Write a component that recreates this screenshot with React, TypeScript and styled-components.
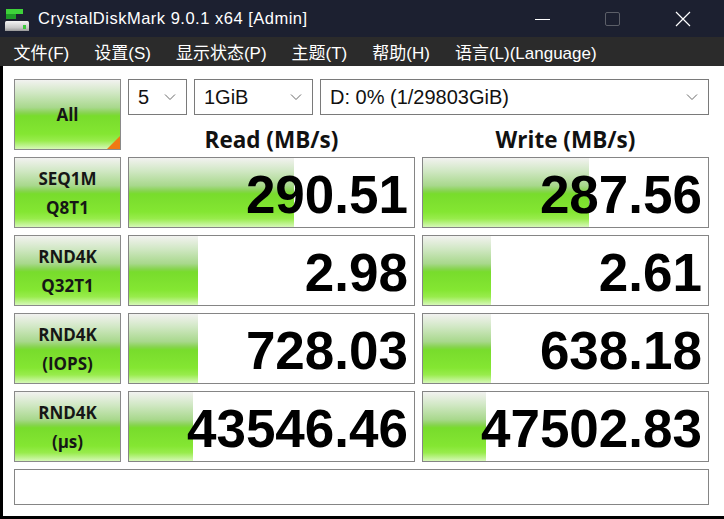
import styled, { createGlobalStyle } from "styled-components";

const GlobalStyle = createGlobalStyle`
  html, body {
    margin: 0;
    padding: 0;
    background: #000;
  }
  body {
    font-family: "Liberation Sans", "Noto Sans CJK SC", sans-serif;
  }
`;

const GREEN = `linear-gradient(
  to bottom,
  #f2f2f0 0%,
  #d2e8c6 18%,
  #a8d88c 40%,
  #86d44e 48%,
  #78dc2c 52%,
  #84e632 78%,
  #98ec4c 88%,
  #d6f8b8 100%
)`;

const menus = ["文件(F)", "设置(S)", "显示状态(P)", "主题(T)", "帮助(H)", "语言(L)(Language)"];

const rows = [
  { top: "SEQ1M", bottom: "Q8T1", read: "290.51", readFill: 165, write: "287.56", writeFill: 166 },
  { top: "RND4K", bottom: "Q32T1", read: "2.98", readFill: 69, write: "2.61", writeFill: 68 },
  { top: "RND4K", bottom: "(IOPS)", read: "728.03", readFill: 69, write: "638.18", writeFill: 68 },
  { top: "RND4K", bottom: "(µs)", read: "43546.46", readFill: 64, write: "47502.83", writeFill: 63 },
];

function AppIcon() {
  return (
    <svg width="24" height="24" viewBox="0 0 24 24">
      <defs>
        <linearGradient id="drive" x1="0" y1="0" x2="0" y2="1">
          <stop offset="0" stopColor="#f4f4f4" />
          <stop offset="0.6" stopColor="#c8c8c8" />
          <stop offset="1" stopColor="#8a8a8a" />
        </linearGradient>
      </defs>
      <rect x="1" y="2" width="17" height="5" fill="#3ed23a" />
      <rect x="1" y="7" width="10" height="5" fill="#1f9a28" />
      <rect x="0" y="14" width="24" height="11" rx="1.5" fill="url(#drive)" />
      <rect x="18" y="18" width="3" height="4" fill="#3cc83c" />
    </svg>
  );
}

function Chevron() {
  return (
    <svg width="12" height="8" viewBox="0 0 12 8">
      <polyline points="1,1.5 6,6.5 11,1.5" fill="none" stroke="#6a6a6a" strokeWidth="1" />
    </svg>
  );
}

function App() {
  return (
    <>
      <GlobalStyle />
      <Window>
        <TitleBar>
          <IconSlot>
            <AppIcon />
          </IconSlot>
          <Title>CrystalDiskMark 9.0.1 x64 [Admin]</Title>
          <Controls>
            <CtrlButton>
              <svg width="16" height="16" viewBox="0 0 16 16">
                <line x1="0" y1="8.5" x2="15" y2="8.5" stroke="#fff" strokeWidth="1" />
              </svg>
            </CtrlButton>
            <CtrlButton>
              <svg width="16" height="16" viewBox="0 0 16 16">
                <rect x="0.5" y="1.5" width="14" height="13" rx="1.5" fill="none" stroke="#5c5f68" strokeWidth="1" />
              </svg>
            </CtrlButton>
            <CtrlButton>
              <svg width="16" height="16" viewBox="0 0 16 16">
                <path d="M1 1 L15 15 M15 1 L1 15" stroke="#fff" strokeWidth="1.2" />
              </svg>
            </CtrlButton>
          </Controls>
        </TitleBar>
        <MenuBar>
          {menus.map((m) => (
            <MenuItem key={m}>{m}</MenuItem>
          ))}
        </MenuBar>
        <Client>
          <Board>
            <AllButton>
              All
              <Corner />
            </AllButton>
            <TopRight>
              <Selects>
                <Select $width={59}>
                  <span>5</span>
                  <Chevron />
                </Select>
                <Select $width={119}>
                  <span>1GiB</span>
                  <Chevron />
                </Select>
                <Select>
                  <span>D: 0% (1/29803GiB)</span>
                  <Chevron />
                </Select>
              </Selects>
              <Headers>
                <Header>Read (MB/s)</Header>
                <Header>Write (MB/s)</Header>
              </Headers>
            </TopRight>
            {rows.map((r, i) => (
              <Row key={i}>
                <Label>
                  <span>{r.top}</span>
                  <span>{r.bottom}</span>
                </Label>
                <Cell>
                  <Fill style={{ width: r.readFill }} />
                  <Value>{r.read}</Value>
                </Cell>
                <Cell>
                  <Fill style={{ width: r.writeFill }} />
                  <Value>{r.write}</Value>
                </Cell>
              </Row>
            ))}
            <Comment />
          </Board>
        </Client>
      </Window>
    </>
  );
}

const Window = styled.div`
  width: 724px;
  height: 519px;
  display: flex;
  flex-direction: column;
  background: #000;
  overflow: hidden;
`;

const TitleBar = styled.div`
  flex-shrink: 0;
  height: 37px;
  display: flex;
  align-items: center;
  background: #1c2030;
  color: #fff;
`;

const IconSlot = styled.div`
  width: 24px;
  height: 24px;
  margin: 0 9px 0 5px;
  display: flex;
`;

const Title = styled.div`
  font-size: 16.5px;
  letter-spacing: 0.5px;
  flex: 1;
  white-space: nowrap;
`;

const Controls = styled.div`
  display: flex;
  height: 100%;
  margin-right: 6px;
`;

const CtrlButton = styled.div`
  width: 70px;
  display: flex;
  align-items: center;
  justify-content: center;
`;

const MenuBar = styled.div`
  flex-shrink: 0;
  height: 29px;
  display: flex;
  align-items: center;
  background: #2b2b2b;
  color: #fff;
  padding-left: 1px;
`;

const MenuItem = styled.div`
  font-size: 17px;
  padding: 0 12.5px;
  white-space: nowrap;
`;

const Client = styled.div`
  flex: 1;
  margin: 0 0 3px 3px;
  background: #fff;
  padding: 13px 0 0 11px;
`;

const Board = styled.div`
  display: grid;
  grid-template-columns: 107px 287px 287px;
  grid-template-rows: repeat(5, 71px) 36px;
  column-gap: 7px;
  row-gap: 7px;
`;

const Row = styled.div`
  display: contents;
`;

const greenButton = `
  box-sizing: border-box;
  border: 1px solid #8a8a8a;
  background: ${GREEN};
  font-family: "Open Sans", "Liberation Sans", sans-serif;
  font-weight: 700;
  font-size: 17px;
  color: #161616;
  display: flex;
  flex-direction: column;
  align-items: center;
  justify-content: center;
`;

const AllButton = styled.div`
  ${greenButton}
  position: relative;
`;

const Corner = styled.div`
  position: absolute;
  right: 0;
  bottom: 0;
  width: 0;
  height: 0;
  border-style: solid;
  border-width: 0 0 13px 13px;
  border-color: transparent transparent #f07a14 transparent;
`;

const Label = styled.div`
  ${greenButton}
  line-height: 29px;
  padding-top: 1px;
`;

const TopRight = styled.div`
  grid-column: 2 / 4;
  display: flex;
  flex-direction: column;
`;

const Selects = styled.div`
  display: flex;
  gap: 7px;
  height: 36px;
  flex-shrink: 0;
`;

const Select = styled.div<{ $width?: number }>`
  box-sizing: border-box;
  ${({ $width }) => ($width ? `width: ${$width}px;` : "flex: 1;")}
  height: 36px;
  border: 1px solid #7a7a7a;
  background: #fff;
  display: flex;
  align-items: center;
  justify-content: space-between;
  padding: 0 10px 0 9px;
  font-size: 20px;
  color: #111;
  white-space: nowrap;
`;

const Headers = styled.div`
  display: grid;
  grid-template-columns: 287px 287px;
  column-gap: 7px;
  padding-top: 11px;
`;

const Header = styled.div`
  text-align: center;
  font-family: "Open Sans", "Liberation Sans", sans-serif;
  font-weight: 700;
  font-size: 22.5px;
  line-height: 28px;
  color: #111;
`;

const Cell = styled.div`
  position: relative;
  box-sizing: border-box;
  border: 1px solid #858585;
  background: #fff;
  overflow: hidden;
  display: flex;
  align-items: center;
  justify-content: flex-end;
`;

const Fill = styled.div`
  position: absolute;
  left: 0;
  top: 0;
  bottom: 0;
  background: ${GREEN};
`;

const Value = styled.div`
  position: relative;
  font-family: "Liberation Sans", sans-serif;
  font-weight: 700;
  font-size: 53px;
  line-height: 1;
  color: #000;
  padding: 4px 6px 0 0;
`;

const Comment = styled.div`
  grid-column: 1 / 4;
  box-sizing: border-box;
  border: 1px solid #858585;
`;

export default App;
